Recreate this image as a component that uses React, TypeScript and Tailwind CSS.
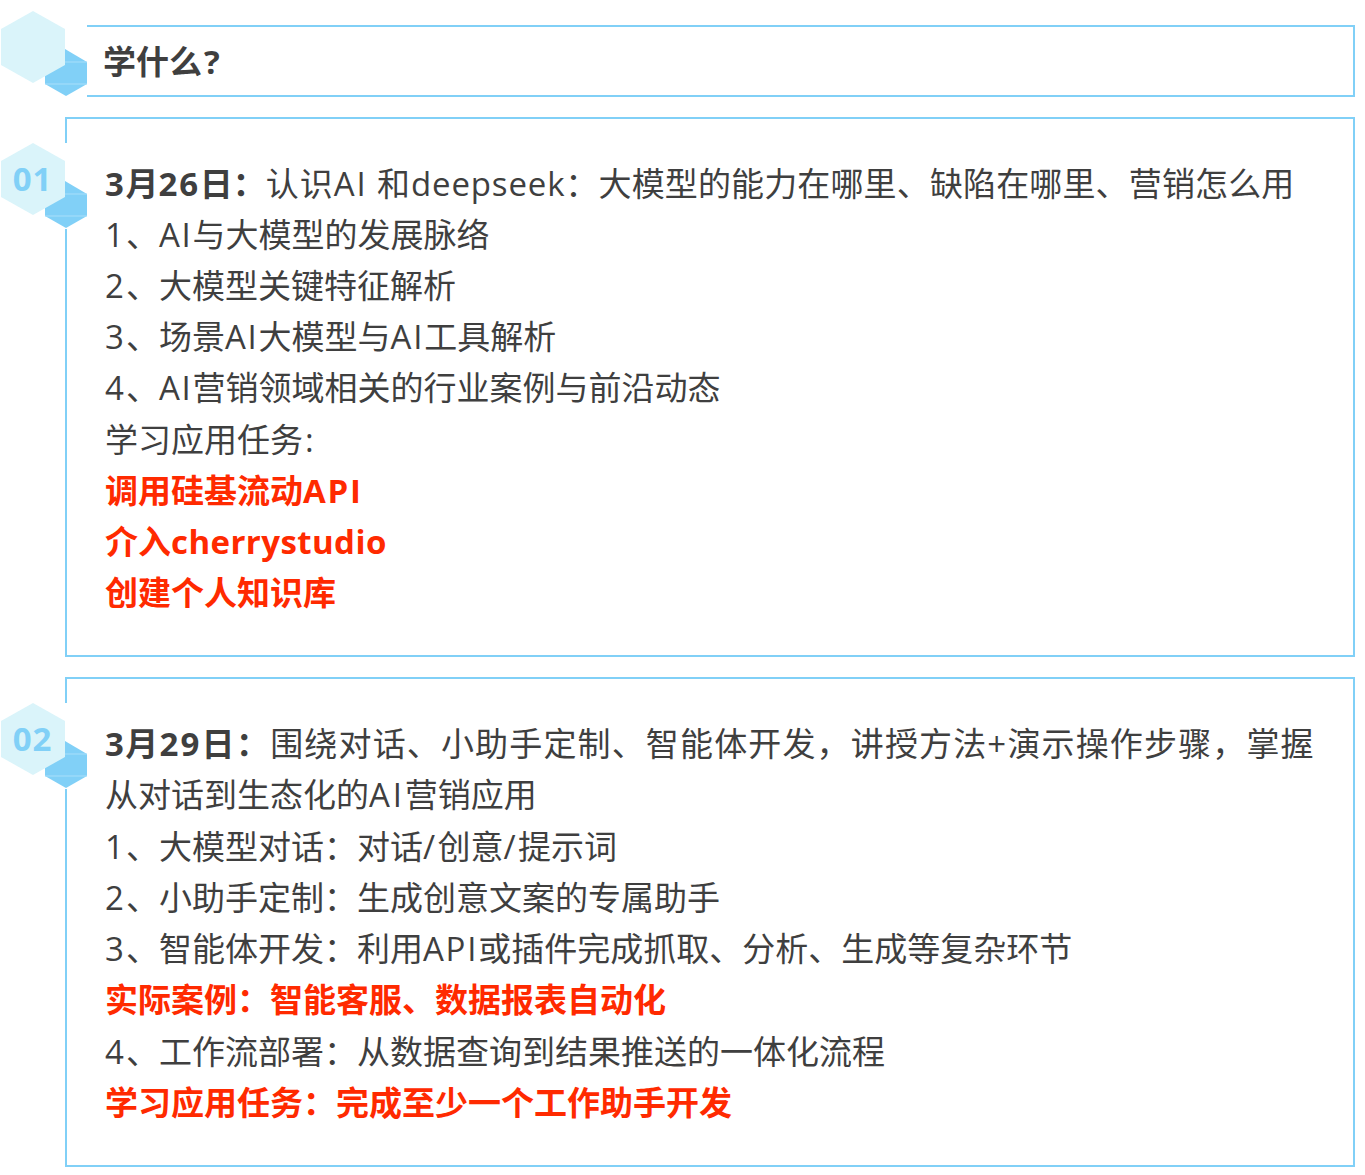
import type { ReactNode } from "react";

function Badge({ label }: { label?: string }) {
  return (
    <div className="absolute left-0 w-[87px] h-[86px] bg-white">
      <svg width="88" height="86" viewBox="0 0 88 86" className="absolute left-0 top-0">
        <polygon points="65,38 87,51 87,73 66,85 45,73 45,50" fill="#81d0f7" />
        <line x1="45" y1="51" x2="87" y2="51" stroke="#a8dffa" strokeWidth="1" />
        <line x1="45" y1="73" x2="87" y2="73" stroke="#a8dffa" strokeWidth="1" />
        <polygon points="33,0 65,18 65,54 33,72 1,54 1,18" fill="#daf4fa" />
      </svg>
      {label ? (
        <span className="absolute left-0 top-[16px] w-[65px] text-center text-[33px] leading-[40px] font-bold text-[#81d0f7] [font-family:'Open_Sans','Noto_Sans',sans-serif] tracking-[1px]">
          {label}
        </span>
      ) : null}
    </div>
  );
}

function fmt(s: string, bold = false): ReactNode[] {
  return s.split(/(\d+|API|AI|[a-z]+|[:+/?])/).map((part, i) => {
    if (!part) return null;
    if (/^\d+$/.test(part)) return <span key={i} className={bold ? "tracking-[1.7px]" : "tracking-[2px]"}>{part}</span>;
    if (part === "API" || part === "AI") return <span key={i} className={bold ? "tracking-[1.7px]" : "tracking-[1.8px]"}>{part}</span>;
    if (/^[a-z]+$/.test(part)) return <span key={i} className={bold ? "tracking-[0.42px]" : "tracking-[0.6px]"}>{part}</span>;
    if (part === ":" || part === "?") return <span key={i} className="ml-[2px]">{part}</span>;
    if (/^[+/]$/.test(part)) return <span key={i} className="tracking-[2.5px]">{part}</span>;
    return <span key={i}>{part}</span>;
  });
}

const Line = ({ t }: { t: string }) => <p>{fmt(t)}</p>;
const Red = ({ t }: { t: string }) => <p className="font-bold text-[#ff2a00]">{fmt(t, true)}</p>;

export default function App() {
  return (
    <div className="relative w-[1365px] h-[1175px] bg-white text-[33px] text-[#3f3f3f] [font-family:'Open_Sans','Noto_Sans_CJK_SC',sans-serif]">
      <div className="absolute left-0 top-[11px]"><Badge /></div>
      <div className="flex flex-col pt-[25px] pl-[65px] pr-[10px]">
        <div className="ml-[22px] h-[72px] border-y-2 border-r-2 border-[#81d0f7] flex items-center pl-[16px] font-bold">
          <span className="relative top-[1px]">{fmt("学什么?", true)}</span>
        </div>
        <div className="relative mt-[20px] h-[540px] border-2 border-[#81d0f7] pt-[38.5px] pl-[38px] pr-[30px] leading-[51.2px]">
          <div className="absolute left-[-67px] top-[24px]"><Badge label="01" /></div>
          <div className="relative">
            <p className="whitespace-nowrap">
              <b>{fmt("3月26日：", true)}</b>
              <span className="tracking-[1px]">认识</span>
              {fmt("AI")}
              <span className="tracking-[1px]"> 和</span>
              <span className="tracking-[0.85px]">deepseek</span>
              <span className="tracking-[0.14px]">：大模型的能力在哪里、缺陷在哪里、营销怎么用</span>
            </p>
            <Line t="1、AI与大模型的发展脉络" />
            <Line t="2、大模型关键特征解析" />
            <Line t="3、场景AI大模型与AI工具解析" />
            <Line t="4、AI营销领域相关的行业案例与前沿动态" />
            <Line t="学习应用任务:" />
            <Red t="调用硅基流动API" />
            <Red t="介入cherrystudio" />
            <Red t="创建个人知识库" />
          </div>
        </div>
        <div className="relative mt-[20px] h-[490px] border-2 border-[#81d0f7] pt-[39px] pl-[38px] pr-[30px] leading-[51.3px]">
          <div className="absolute left-[-67px] top-[24px]"><Badge label="02" /></div>
          <div className="relative">
            <p className="whitespace-nowrap">
              <b className="tracking-[1.3px]">3月<span className="tracking-[2.2px]">29</span>日：</b>
              <span className="tracking-[1.15px]">围绕对话、小助手定制、智能体开发，讲授方法+演示操作步骤，掌握</span>
            </p>
            <p>从对话到生态化的<span className="tracking-[2.8px]">AI</span>营销应用</p>
            <Line t="1、大模型对话：对话/创意/提示词" />
            <Line t="2、小助手定制：生成创意文案的专属助手" />
            <Line t="3、智能体开发：利用API或插件完成抓取、分析、生成等复杂环节" />
            <Red t="实际案例：智能客服、数据报表自动化" />
            <Line t="4、工作流部署：从数据查询到结果推送的一体化流程" />
            <Red t="学习应用任务：完成至少一个工作助手开发" />
          </div>
        </div>
      </div>
    </div>
  );
}
